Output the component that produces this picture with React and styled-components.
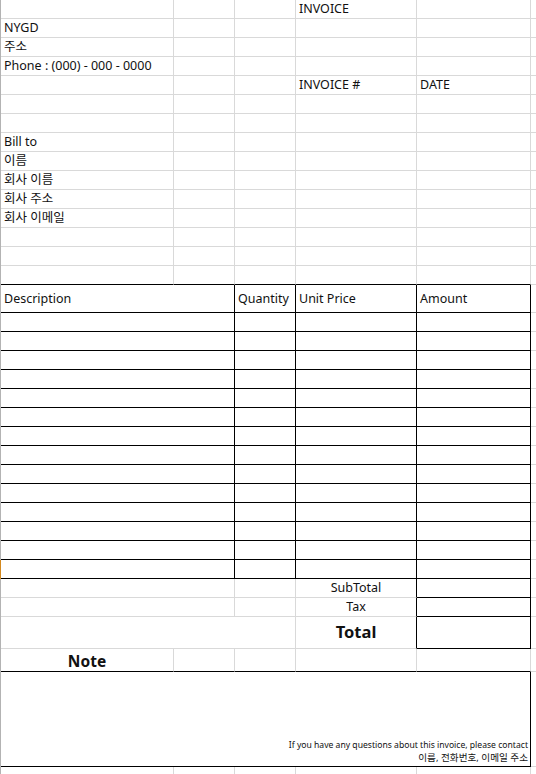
import React from "react";
import styled, { createGlobalStyle } from "styled-components";

const GRID = "#d9d9d9";
const INK = "#000";

const GlobalStyle = createGlobalStyle`
  html, body {
    margin: 0;
    padding: 0;
    background: #fff;
  }
  body {
    font-family: "Noto Sans", "Noto Sans CJK KR", sans-serif;
    color: #111;
    overflow: hidden;
  }
`;

const Sheet = styled.div`
  width: 536px;
  height: 774px;
  overflow: hidden;
`;

const Row = styled.div`
  display: grid;
  grid-template-columns: 173px 61px 61px 121px 114px 1fr;
  height: ${(p) => p.$h || 19}px;
  border-left: 1px solid ${(p) => (p.$mark ? "#d3891f" : "#b3b3b3")};
  box-sizing: border-box;
`;

const Cell = styled.div`
  grid-column: span ${(p) => p.$span || 1};
  box-sizing: border-box;
  display: flex;
  flex-direction: column;
  justify-content: ${(p) => (p.$middle ? "center" : "flex-end")};
  align-items: ${(p) =>
    p.$align === "center" ? "center" : p.$align === "right" ? "flex-end" : "flex-start"};
  padding: 0 ${(p) => (p.$align === "right" ? 2 : 3)}px ${(p) => p.$pb ?? 2}px
    ${(p) => (p.$align === "right" ? 0 : 3)}px;
  border-right: 1px solid ${(p) => (p.$r ? INK : GRID)};
  border-bottom: 1px solid ${(p) => (p.$b ? INK : GRID)};
  font-size: ${(p) => p.$size || 12.5}px;
  font-weight: ${(p) => (p.$bold ? 700 : 400)};
  line-height: ${(p) => p.$lh || 15}px;
  white-space: nowrap;
  color: #111;
`;

const SmallLine = styled.span`
  display: block;
  font-size: ${(p) => p.$size || 8.6}px;
`;

const PlainRow = ({ a, d, e, last }) => (
  <Row>
    <Cell $b={last}>{a}</Cell>
    <Cell $b={last} />
    <Cell $b={last} />
    <Cell $b={last}>{d}</Cell>
    <Cell $b={last}>{e}</Cell>
    <Cell />
  </Row>
);

const ItemRow = ({ mark }) => (
  <Row $mark={mark}>
    <Cell $span={2} $b $r />
    <Cell $b $r />
    <Cell $b $r />
    <Cell $b $r />
    <Cell />
  </Row>
);

const topRows = [
  { d: "INVOICE" },
  { a: "NYGD" },
  { a: "주소" },
  { a: "Phone : (000) - 000 - 0000" },
  { d: "INVOICE #", e: "DATE" },
  {},
  {},
  { a: "Bill to" },
  { a: "이름" },
  { a: "회사 이름" },
  { a: "회사 주소" },
  { a: "회사 이메일" },
  {},
  {},
];

export default function App() {
  const items = Array.from({ length: 14 });

  return (
    <Sheet>
      <GlobalStyle />
      {topRows.map((r, i) => (
        <PlainRow key={i} {...r} />
      ))}
      <PlainRow last />

      <Row $h={28}>
        <Cell $span={2} $b $r $middle $pb={0}>
          Description
        </Cell>
        <Cell $b $r $middle $pb={0}>
          Quantity
        </Cell>
        <Cell $b $r $middle $pb={0}>
          Unit Price
        </Cell>
        <Cell $b $r $middle $pb={0}>
          Amount
        </Cell>
        <Cell />
      </Row>

      {items.map((_, i) => (
        <ItemRow key={i} mark={i === items.length - 1} />
      ))}

      <Row>
        <Cell $span={2} />
        <Cell />
        <Cell $align="center" $r>
          SubTotal
        </Cell>
        <Cell $b $r />
        <Cell />
      </Row>
      <Row>
        <Cell $span={2} />
        <Cell />
        <Cell $align="center" $r>
          Tax
        </Cell>
        <Cell $b $r />
        <Cell />
      </Row>
      <Row $h={32}>
        <Cell $span={3} />
        <Cell $align="center" $r $bold $size={16.5} $lh={20} $pb={6}>
          Total
        </Cell>
        <Cell $b $r />
        <Cell />
      </Row>

      <Row $h={23}>
        <Cell $b $align="center" $bold $size={15.5} $lh={18} $pb={1}>
          Note
        </Cell>
        <Cell $b />
        <Cell $b />
        <Cell $b />
        <Cell $b />
        <Cell />
      </Row>
      <Row $h={95}>
        <Cell $span={5} $b $r $align="right" $lh={12.4} $pb={2}>
          <SmallLine>If you have any questions about this invoice, please contact</SmallLine>
          <SmallLine $size={9.6}>이름, 전화번호, 이메일 주소</SmallLine>
        </Cell>
        <Cell />
      </Row>
      <PlainRow />
    </Sheet>
  );
}
